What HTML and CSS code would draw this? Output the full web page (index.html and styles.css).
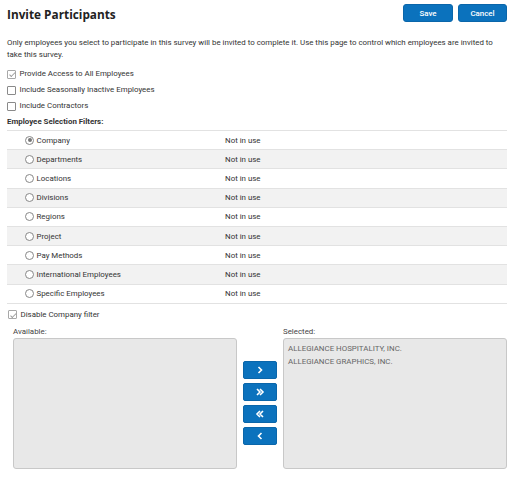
FILE: index.html
```html
<!DOCTYPE html>
<html>
<head>
<meta charset="utf-8">
<link rel="stylesheet" href="styles.css">
</head>
<body>
<div class="page">
  <div class="header">
    <h1 class="title">Invite Participants</h1>
    <div class="actions">
      <button class="btn">Save</button>
      <button class="btn">Cancel</button>
    </div>
  </div>
  <p class="intro">Only employees you select to participate in this survey will be invited to complete it. Use this page to control which employees are invited to take this survey.</p>
  <div class="checks">
    <label class="check"><span class="box checked"></span>Provide Access to All Employees</label>
    <label class="check"><span class="box"></span>Include Seasonally Inactive Employees</label>
    <label class="check"><span class="box"></span>Include Contractors</label>
  </div>
  <div class="section-title">Employee Selection Filters:</div>
  <div class="filters">
    <div class="row"><span class="name"><span class="radio on"></span>Company</span><span class="status">Not in use</span></div>
    <div class="row alt"><span class="name"><span class="radio"></span>Departments</span><span class="status">Not in use</span></div>
    <div class="row"><span class="name"><span class="radio"></span>Locations</span><span class="status">Not in use</span></div>
    <div class="row alt"><span class="name"><span class="radio"></span>Divisions</span><span class="status">Not in use</span></div>
    <div class="row"><span class="name"><span class="radio"></span>Regions</span><span class="status">Not in use</span></div>
    <div class="row alt"><span class="name"><span class="radio"></span>Project</span><span class="status">Not in use</span></div>
    <div class="row"><span class="name"><span class="radio"></span>Pay Methods</span><span class="status">Not in use</span></div>
    <div class="row alt"><span class="name"><span class="radio"></span>International Employees</span><span class="status">Not in use</span></div>
    <div class="row"><span class="name"><span class="radio"></span>Specific Employees</span><span class="status">Not in use</span></div>
  </div>
  <label class="check disable"><span class="box checked"></span>Disable Company filter</label>
  <div class="picker">
    <div class="col">
      <div class="lbl">Available:</div>
      <div class="list"></div>
    </div>
    <div class="movers">
      <button class="mv"><svg viewBox="0 0 10 10" width="10" height="10"><path d="M3.5 2 L6.5 5 L3.5 8" fill="none" stroke="#fff" stroke-width="1.6"/></svg></button>
      <button class="mv"><svg viewBox="0 0 10 10" width="10" height="10"><path d="M2 2 L5 5 L2 8 M5 2 L8 5 L5 8" fill="none" stroke="#fff" stroke-width="1.6"/></svg></button>
      <button class="mv"><svg viewBox="0 0 10 10" width="10" height="10"><path d="M5 2 L2 5 L5 8 M8 2 L5 5 L8 8" fill="none" stroke="#fff" stroke-width="1.6"/></svg></button>
      <button class="mv"><svg viewBox="0 0 10 10" width="10" height="10"><path d="M6.5 2 L3.5 5 L6.5 8" fill="none" stroke="#fff" stroke-width="1.6"/></svg></button>
    </div>
    <div class="col">
      <div class="lbl">Selected:</div>
      <div class="list">
        <div class="item">ALLEGIANCE HOSPITALITY, INC.</div>
        <div class="item">ALLEGIANCE GRAPHICS, INC.</div>
      </div>
    </div>
  </div>
</div>
</body>
</html>
```

FILE: styles.css
```css
* { box-sizing: border-box; }
html, body { margin: 0; padding: 0; background: #fff; }
body { font-family: Roboto, "Liberation Sans", sans-serif; font-size: 7.9px; color: #333; }
.page { padding: 4px 6px 0 7px; }
.header { display: flex; justify-content: space-between; align-items: flex-start; height: 27px; }
.title { font-family: "Open Sans", "Liberation Sans", sans-serif; font-weight: 700; font-size: 11.8px; line-height: 16px; margin: 2px 0 0 0; color: #222; }
.actions { display: flex; gap: 5px; }
.btn { width: 50px; height: 18px; background: #0b72bd; color: #fff; border: 1px solid #0a66aa; border-radius: 3px; font-family: Roboto, sans-serif; font-size: 7.9px; font-weight: 500; padding: 0; }
.actions .btn:last-child { width: 49px; }
.intro { margin: 6px 0 0 0; line-height: 12px; color: #333; max-width: 496px; }
.checks { margin-top: 7px; display: flex; flex-direction: column; gap: 4px; }
.check { display: flex; align-items: center; height: 12px; line-height: 12px; color: #333; }
.box { width: 9px; height: 9px; border: 1px solid #8a8a8a; border-radius: 1px; margin-right: 3.5px; position: relative; background: #fff; flex: none; }
.box.checked { border-color: #a8a8a8; }
.box.checked::after { content: ""; position: absolute; left: 2.5px; top: 0.5px; width: 2px; height: 4.5px; border: solid #999; border-width: 0 1px 1px 0; transform: rotate(45deg); }
.section-title { font-weight: 700; margin-top: 4px; height: 14px; line-height: 12px; color: #333; }
.filters { border-top: 1px solid #e2e2e2; }
.row { display: flex; align-items: center; height: 19.2px; border-bottom: 1px solid #e2e2e2; }
.row.alt { background: #f2f2f2; }
.name { display: flex; align-items: center; width: 218px; padding-left: 18px; }
.radio { width: 9px; height: 9px; border: 1px solid #888; border-radius: 50%; margin-right: 2.5px; position: relative; background: #fff; flex: none; }
.radio.on::after { content: ""; position: absolute; left: 1.5px; top: 1.5px; width: 4px; height: 4px; border-radius: 50%; background: #777; }
.disable { margin-top: 5px; margin-left: 1px; }
.picker { display: flex; margin-top: 6px; padding-left: 6px; }
.col { display: flex; flex-direction: column; }
.lbl { height: 11px; line-height: 9px; color: #444; }
.list { width: 224px; height: 131px; background: #e8e8e8; border: 1px solid #c8c8c8; border-radius: 3px; padding: 3px 4px; }
.item { color: #666; line-height: 13px; }
.movers { display: flex; flex-direction: column; gap: 4px; margin: 34px 6px 0 6px; }
.mv { width: 34px; height: 18px; background: #0b72bd; border: 1px solid #0a66aa; border-radius: 2px; padding: 0; display: flex; align-items: center; justify-content: center; }
```
